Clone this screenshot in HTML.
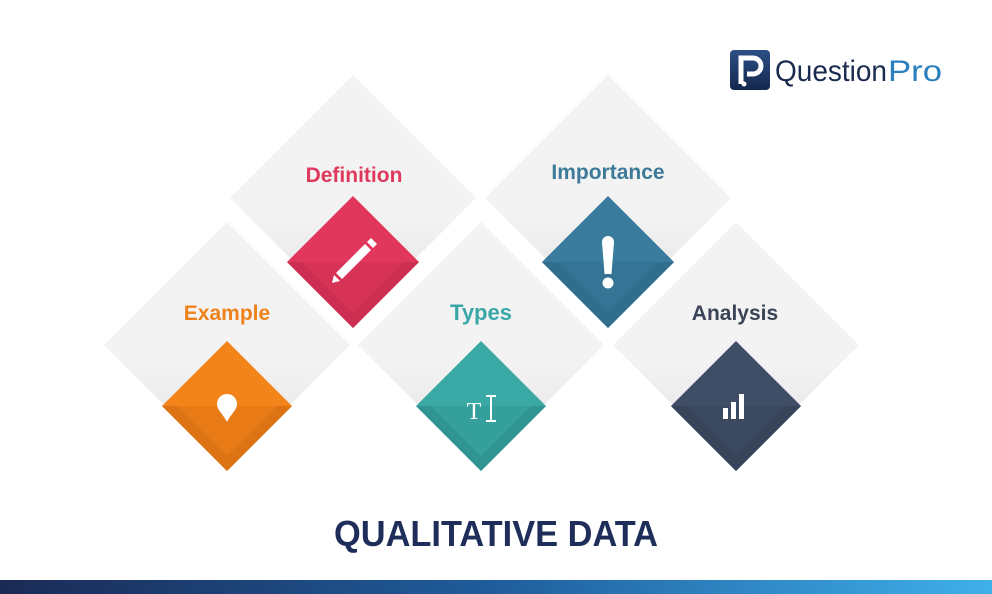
<!DOCTYPE html>
<html><head><meta charset="utf-8"><style>
html,body{margin:0;padding:0;background:#fff;width:992px;height:594px;overflow:hidden}
svg{display:block}
text{font-family:"Liberation Sans",Arial,sans-serif;font-weight:bold}
</style></head><body>
<svg width="992" height="594" viewBox="0 0 992 594" xmlns="http://www.w3.org/2000/svg">
<defs>
<linearGradient id="bar" x1="0" x2="1" y1="0" y2="0"><stop offset="0" stop-color="#1b2a55"/><stop offset="0.5" stop-color="#1f5d9c"/><stop offset="1" stop-color="#3fb0ea"/></linearGradient>
<linearGradient id="sh" x1="0" x2="0" y1="0" y2="1"><stop offset="0" stop-color="#f3f3f3"/><stop offset="0.55" stop-color="#f3f3f3"/><stop offset="1" stop-color="#e2e2e2"/></linearGradient>
<linearGradient id="qp" x1="0" x2="0" y1="0" y2="1"><stop offset="0" stop-color="#2d4f86"/><stop offset="1" stop-color="#13284e"/></linearGradient>
</defs>
<g fill="url(#sh)">
<polygon points="353,75 476,198 353,321 230,198"/>
<polygon points="608,75 731,198 608,321 485,198"/>
<polygon points="227,222 350,345 227,468 104,345"/>
<polygon points="481,222 604,345 481,468 358,345"/>
<polygon points="736,222 859,345 736,468 613,345"/>
</g>
<g>
<polygon points="353,196 419,262 353,328 287,262" fill="#e2375d"/>
<polygon points="287,262 419,262 353,328" fill="#cc2f52"/>
<polygon points="302,262 404,262 353,313" fill="#d73357"/>
<polygon points="608,196 674,262 608,328 542,262" fill="#3a7c9e"/>
<polygon points="542,262 674,262 608,328" fill="#316d8c"/>
<polygon points="557,262 659,262 608,313" fill="#357494"/>
<polygon points="227,341 292,406 227,471 162,406" fill="#f28419"/>
<polygon points="162,406 292,406 227,471" fill="#dd7414"/>
<polygon points="177,406 277,406 227,456" fill="#e87b16"/>
<polygon points="481,341 546,406 481,471 416,406" fill="#3aa9a6"/>
<polygon points="416,406 546,406 481,471" fill="#309592"/>
<polygon points="431,406 531,406 481,456" fill="#359f9c"/>
<polygon points="736,341 801,406 736,471 671,406" fill="#3f4e66"/>
<polygon points="671,406 801,406 736,471" fill="#364359"/>
<polygon points="686,406 786,406 736,456" fill="#3b4960"/>
</g>
<g fill="#fff">
<polygon points="336,273 365,244 371,250 342,279"/>
<polygon points="367,242 371,238 377,244 373,248"/>
<polygon points="334,275 340,281 332,283"/>
<path d="M602,242 a6,6 0 0 1 12,0 l-2.5,32 h-7z"/>
<circle cx="608" cy="283" r="5.5"/>
<path d="M227,394 a10,10 0 0 1 10,10 c0,6 -6,10 -10,18 c-4,-8 -10,-12 -10,-18 a10,10 0 0 1 10,-10z"/>
<rect x="723" y="408" width="5" height="11"/><rect x="731" y="402" width="5" height="17"/><rect x="739" y="394" width="5" height="25"/>
</g>
<text x="474" y="419" font-size="24" fill="#fff" text-anchor="middle" style="font-family:'Liberation Serif',serif;font-weight:normal">T</text>
<g stroke="#fff" stroke-width="2"><line x1="491" y1="396" x2="491" y2="421"/><line x1="486" y1="396" x2="496" y2="396"/><line x1="486" y1="421" x2="496" y2="421"/></g>
<text x="354" y="182" font-size="21" fill="#e0395e" text-anchor="middle">Definition</text>
<text x="608" y="179" font-size="21" fill="#3d7a9a" text-anchor="middle">Importance</text>
<text x="227" y="320" font-size="21" fill="#f0821c" text-anchor="middle">Example</text>
<text x="481" y="320" font-size="22" fill="#3aa8a8" text-anchor="middle">Types</text>
<text x="735" y="320" font-size="21" fill="#3b4457" text-anchor="middle">Analysis</text>
<text x="496" y="546" font-size="36" fill="#1e2d5a" text-anchor="middle" textLength="324" lengthAdjust="spacingAndGlyphs">QUALITATIVE DATA</text>
<rect x="730" y="50" width="40" height="40" rx="4" fill="url(#qp)"/>
<path d="M741,84 V58 h12 a8,8 0 0 1 0,16 h-6" fill="none" stroke="#fff" stroke-width="5"/>
<circle cx="744" cy="84" r="2.5" fill="#fff"/>
<text x="775" y="81" font-size="30" fill="#1a2b50" style="font-weight:normal" textLength="112" lengthAdjust="spacingAndGlyphs">Question</text>
<text x="888" y="81" font-size="30" fill="#2a7fbd" style="font-weight:normal" textLength="54" lengthAdjust="spacingAndGlyphs">Pro</text>
<rect x="0" y="580" width="992" height="14" fill="url(#bar)"/>
</svg>
</body></html>
